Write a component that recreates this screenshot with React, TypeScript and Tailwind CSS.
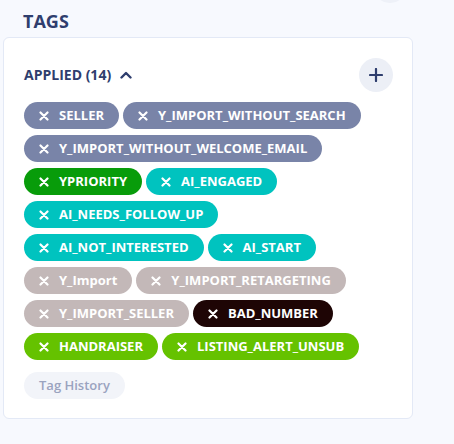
import { useState } from "react";

/* ── Tag data ───────────────────────────────────────────────────── */
const tags = [
  { label: "SELLER", color: "bg-[#7984a8]" },
  { label: "Y_IMPORT_WITHOUT_SEARCH", color: "bg-[#7984a8]" },
  { label: "Y_IMPORT_WITHOUT_WELCOME_EMAIL", color: "bg-[#7984a8]" },
  { label: "YPRIORITY", color: "bg-[#089c0a]" },
  { label: "AI_ENGAGED", color: "bg-[#00c3bf]" },
  { label: "AI_NEEDS_FOLLOW_UP", color: "bg-[#00c3bf]" },
  { label: "AI_NOT_INTERESTED", color: "bg-[#00c3bf]" },
  { label: "AI_START", color: "bg-[#00c3bf]" },
  { label: "Y_Import", color: "bg-[#c3b8b8]" },
  { label: "Y_IMPORT_RETARGETING", color: "bg-[#c3b8b8]" },
  { label: "Y_IMPORT_SELLER", color: "bg-[#c3b8b8]" },
  { label: "BAD_NUMBER", color: "bg-[#1e0505]" },
  { label: "HANDRAISER", color: "bg-[#65c200]" },
  { label: "LISTING_ALERT_UNSUB", color: "bg-[#65c200]" },
];

function XIcon() {
  return (
    <svg width="10" height="10" viewBox="0 0 10 10" fill="none" stroke="currentColor" strokeWidth="2.2" strokeLinecap="round">
      <path d="M1.5 1.5l7 7M8.5 1.5l-7 7" />
    </svg>
  );
}

function Chip({ label, color }: { label: string; color: string }) {
  return (
    <span className={`flex h-[27px] items-center gap-[10px] rounded-full pl-[15px] pr-[15px] text-white ${color}`}>
      <XIcon />
      <span className="text-[13px] font-bold leading-none">{label}</span>
    </span>
  );
}

export default function App() {
  const [open, setOpen] = useState(true);

  return (
    <div
      className="relative h-[444px] w-[454px] overflow-hidden bg-[#f7f9fe] text-[#2f3e6e]"
      style={{ fontFamily: '"Open Sans", "Noto Sans", sans-serif' }}
    >
      {/* partial round button peeking from above */}
      <div className="absolute -top-[28px] left-[374px] h-[31px] w-[32px] rounded-full bg-[#eef1f8]" />

      <h2 className="pl-[23px] pt-[9px] text-[18px] font-bold leading-[24px]">TAGS</h2>

      <section className="ml-[3px] mt-[4px] w-[410px] rounded-[6px] border border-[#e3e9f6] bg-white px-[20px] pb-[19px] pt-[20px]">
        <div className="flex items-center justify-between">
          <button
            onClick={() => setOpen(!open)}
            className="flex items-center gap-[9px] text-[14px] font-bold leading-none"
          >
            APPLIED (14)
            <svg width="12" height="8" viewBox="0 0 12 8" fill="none" stroke="currentColor" strokeWidth="2.4" strokeLinecap="round" strokeLinejoin="round" className={open ? "" : "rotate-180"}>
              <path d="M1.5 6.5L6 2l4.5 4.5" />
            </svg>
          </button>
          <button className="mr-[-1px] flex h-[34px] w-[34px] items-center justify-center rounded-full bg-[#eceff6]">
            <svg width="14" height="14" viewBox="0 0 14 14" fill="none" stroke="currentColor" strokeWidth="2.2" strokeLinecap="round">
              <path d="M7 1v12M1 7h12" />
            </svg>
          </button>
        </div>

        {open && (
          <div className="mt-[10px] flex flex-wrap gap-x-[4px] gap-y-[6px]">
            {tags.map((t) => (
              <Chip key={t.label} label={t.label} color={t.color} />
            ))}
          </div>
        )}

        <button className="mt-[12px] h-[27px] rounded-full bg-[#f2f4f9] px-[15px] text-[13px] font-semibold text-[#9aa3bf]">
          Tag History
        </button>
      </section>
    </div>
  );
}
